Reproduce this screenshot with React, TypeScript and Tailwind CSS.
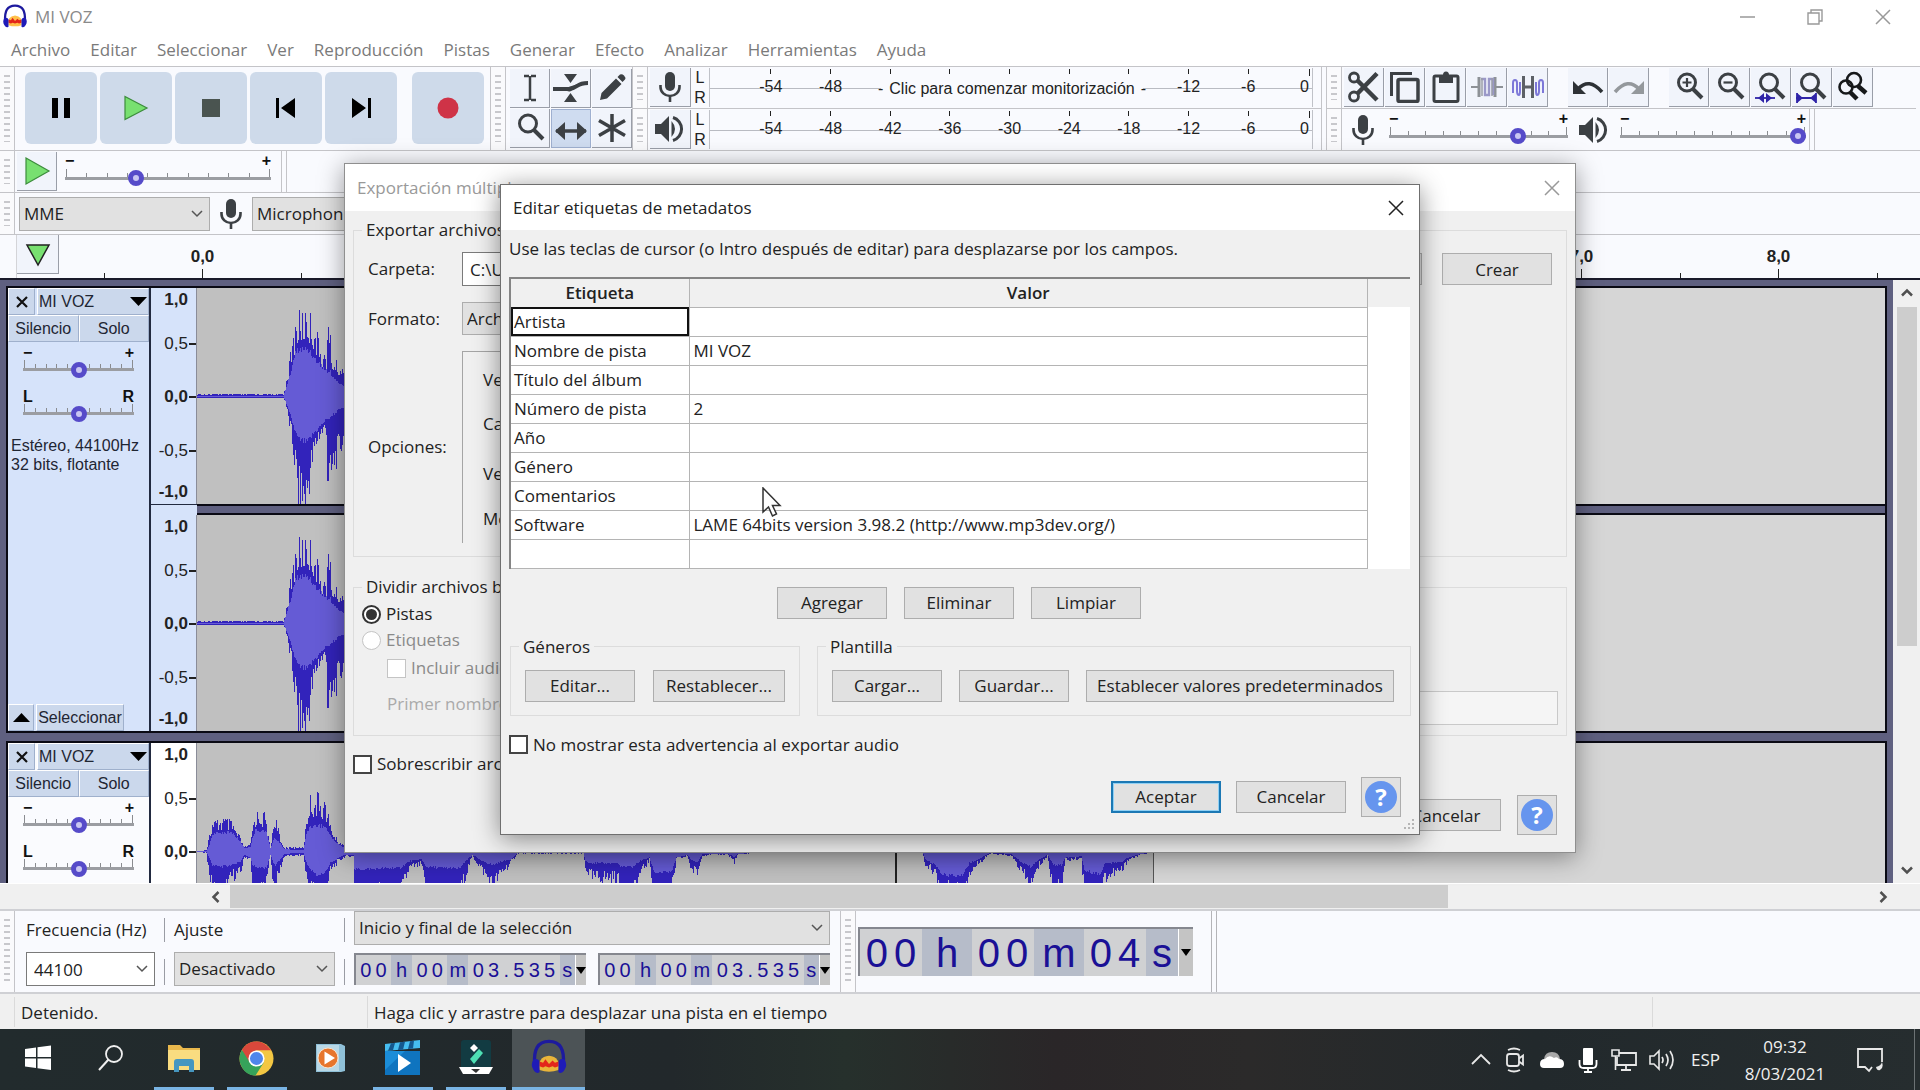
import React from "react";

/* ---------- wave forms ---------- */

// x, peak top, peak bottom, rms top, rms bottom; distances from the centre line
type Point = [number, number, number, number, number];

const VOICE: Point[] = [
  [0, 2, 1, 0, 0], [86, 2, 1, 0, 0], [88, 10, 5, 6, 4], [93, 44, 40, 24, 20], [98, 78, 84, 46, 38],
  [101, 86, 124, 50, 46], [109, 92, 124, 50, 49], [113, 86, 92, 48, 45], [117, 78, 66, 40, 38], [121, 60, 48, 36, 34],
  [128, 44, 40, 28, 25], [129, 44, 40, 28, 25], [130, 74, 100, 26, 23], [133, 66, 100, 26, 23], [134, 42, 96, 22, 20], [137, 38, 80, 20, 18],
  [141, 34, 66, 14, 14], [148, 26, 50, 10, 10], [170, 4, 4, 2, 2], [1200, 2, 2, 0, 0],
];

const SPEECH: Point[] = [
  [0, 0, 0, 0, 0], [9, 1, 1, 0, 0], [11, 14, 20, 4, 4], [15, 30, 46, 18, 14], [25, 36, 54, 20, 16], [35, 30, 30, 20, 14],
  [43, 14, 26, 10, 10], [47, 4, 6, 3, 3], [53, 8, 9, 5, 6], [55, 26, 44, 14, 14], [58, 42, 54, 22, 16], [68, 40, 54, 22, 18], [70, 22, 22, 16, 14],
  [73, 4, 5, 3, 3], [76, 30, 40, 12, 12], [78, 40, 44, 14, 14], [83, 12, 20, 8, 8], [87, 4, 5, 2, 2], [106, 4, 4, 1, 1], [109, 34, 30, 18, 12],
  [112, 58, 44, 26, 18], [121, 60, 54, 28, 26], [128, 54, 50, 26, 22], [133, 28, 24, 16, 12], [139, 14, 14, 9, 8], [147, 6, 6, 3, 3],
  [156, 5, 5, 3, 3], [157, 30, 54, 20, 19], [203, 30, 54, 20, 17], [207, 20, 38, 16, 14], [212, 16, 20, 12, 10], [224, 10, 16, 8, 8],
  [229, 20, 50, 14, 16], [262, 24, 54, 16, 18], [270, 10, 22, 8, 8], [275, 4, 5, 3, 3], [285, 10, 22, 8, 10], [295, 20, 42, 12, 14],
  [305, 16, 24, 10, 10], [313, 10, 15, 7, 8], [320, 2, 2, 1, 1], [386, 2, 2, 1, 1], [388, 12, 20, 8, 10], [395, 14, 32, 9, 12],
  [420, 14, 32, 9, 12], [424, 20, 54, 12, 16], [436, 20, 54, 12, 16], [443, 12, 26, 8, 9], [452, 8, 10, 6, 6], [457, 14, 54, 12, 22],
  [474, 14, 54, 12, 22], [479, 6, 9, 5, 6], [490, 3, 5, 2, 3], [494, 8, 22, 5, 9], [500, 8, 26, 5, 11], [505, 3, 4, 1, 2],
  [530, 2, 3, 1, 2], [537, 5, 12, 2, 5], [541, 2, 3, 1, 2], [570, 0, 0, 0, 0], [725, 0, 0, 0, 0], [728, 8, 16, 5, 8],
  [738, 10, 26, 6, 14], [745, 20, 50, 12, 24], [764, 20, 50, 12, 26], [772, 10, 26, 7, 12], [782, 6, 13, 4, 7], [792, 1, 2, 1, 1],
  [814, 3, 5, 1, 2], [824, 8, 24, 6, 11], [833, 10, 44, 7, 16], [842, 7, 16, 4, 8], [850, 3, 5, 2, 3], [856, 12, 48, 8, 14],
  [864, 12, 48, 8, 14], [868, 5, 10, 3, 6], [884, 4, 8, 3, 5], [887, 20, 54, 12, 20], [903, 20, 54, 12, 24], [907, 10, 32, 6, 13],
  [926, 8, 22, 5, 10], [930, 6, 10, 4, 6], [944, 2, 3, 1, 2], [957, 0, 0, 0, 0],
];

function noise(n: number) {
  const s = Math.sin(n * 12.9898) * 43758.5453;
  return s - Math.floor(s);
}

const HALF = 108;

function envelope(points: Point[], upper: number, lower: number, rough: number) {
  const last = points[points.length - 1][0];
  const top: string[] = [];
  const bottom: string[] = [];
  let i = 0;
  for (let x = 0; x < last; x += 1) {
    while (points[i + 1][0] <= x) i += 1;
    const a = points[i];
    const b = points[i + 1];
    const k = (x - a[0]) / (b[0] - a[0]);
    const up = (a[upper] + (b[upper] - a[upper]) * k) * (1 - rough * noise(x + upper * 31));
    const down = (a[lower] + (b[lower] - a[lower]) * k) * (1 - rough * noise(x + lower * 57));
    top.push(`V${Math.round(HALF - up)}H${x + 1}`);
    bottom.unshift(`V${Math.round(HALF + down + 1)}H${x}`);
  }
  return `M0 ${HALF}${top.join("")}V${HALF}${bottom.join("")}Z`;
}

function Wave({ points, split }: { points: Point[]; split?: boolean }) {
  return (
    <svg width="1200" height="216" className="block shrink-0" aria-hidden="true">
      <path d={envelope(points, 1, 2, 0.45)} fill="#3223bb" shapeRendering="crispEdges" />
      <path d={envelope(points, 3, 4, 0.15)} fill="#655bd5" shapeRendering="crispEdges" />
      {split && <path d="M699 0v216" stroke="#222" strokeWidth="2" />}
    </svg>
  );
}

/* ---------- icons ---------- */

const INK = "#3c4044";

function Svg({ w = 32, h = 32, children, box = "0 0 32 32" }: { w?: number; h?: number; box?: string; children: React.ReactNode }) {
  return (
    <svg width={w} height={h} viewBox={box} fill="none" className="block shrink-0" aria-hidden="true">
      {children}
    </svg>
  );
}

const Mic = () => (
  <Svg>
    <rect x="11" y="1" width="10" height="19" rx="5" fill={INK} />
    <path d="M6.500 14v2a9.500 9 0 0 0 19 0v-2M16 25v6" stroke={INK} strokeWidth="2.600" />
  </Svg>
);
const Speaker = () => (
  <Svg>
    <path d="M1 11h6l8-8v26l-8-8H1z" fill={INK} />
    <path d="M19 4.500a12 12 0 0 1 0 23" stroke={INK} strokeWidth="3" />
    <path d="M17.500 8q7 8 0 16z" fill={INK} />
  </Svg>
);
const IBeam = () => (
  <Svg><path d="M10 4h5m2 0h5M10 28h5m2 0h5M16 4v24" stroke={INK} strokeWidth="2.500" /></Svg>
);
const Envelope = () => (
  <Svg w={38} h={32} box="0 0 38 32">
    <path d="M12 2h13l-6.500 9zM12 30h13l-6.500-9z" fill={INK} />
    <path d="M1 17h16q4 0 8-3t11-3" stroke={INK} strokeWidth="4" />
    <path d="M14 17q4 4 9-3z" fill={INK} stroke={INK} strokeWidth="2" />
  </Svg>
);
const Pencil = () => (
  <Svg>
    <path d="M4 28l1.500-7L20 6.500l5.500 5.500L11 26.500zM21.500 5l2.500-2.500q2-1 4 1t1 4L26.500 10z" fill={INK} />
  </Svg>
);
const Magnifier = ({ children }: { children?: React.ReactNode }) => (
  <Svg>
    <circle cx="14" cy="11.500" r="8.500" stroke={INK} strokeWidth="3" />
    <path d="M20 18l9 9" stroke={INK} strokeWidth="4" />
    {children}
  </Svg>
);
const TimeShift = () => (
  <Svg w={36} h={32} box="0 0 36 32">
    <path d="M3 18h30" stroke={INK} strokeWidth="3.500" />
    <path d="M2 18l10-9v18zM34 18L24 9v18z" fill={INK} />
  </Svg>
);
const Asterisk = () => (
  <Svg><path d="M16 2v28M3 8.500l26 15M29 8.500L3 23.500" stroke={INK} strokeWidth="3.500" /></Svg>
);
const Scissors = () => (
  <Svg>
    <circle cx="6" cy="6.500" r="4.500" stroke={INK} strokeWidth="2.800" />
    <circle cx="6" cy="25.500" r="4.500" stroke={INK} strokeWidth="2.800" />
    <path d="M9 9l20 20M9 23L29 2.500" stroke={INK} strokeWidth="4.500" />
  </Svg>
);
const Copy = () => (
  <Svg>
    <path d="M2.500 25V2.500H23" stroke={INK} strokeWidth="3" />
    <rect x="9" y="8.500" width="20" height="22" rx="1.500" stroke={INK} strokeWidth="3.500" />
  </Svg>
);
const Paste = () => (
  <Svg>
    <rect x="4" y="5" width="24" height="25.500" rx="1.500" stroke={INK} strokeWidth="3" />
    <path d="M9 4h4q0-3.500 3-3.500t3 3.500h4v8H9z" fill={INK} />
  </Svg>
);
const Trim = () => (
  <Svg>
    <path d="M0 16h7M25 16h7" stroke="#8d9196" strokeWidth="2" />
    <path d="M8 6v20M24 6v20" stroke="#8d9196" strokeWidth="3" />
    <path d="M10 8h4v16h4V8h4v16" stroke="#9a98c8" strokeWidth="2.400" />
    <path d="M11 7v18M21 7v18" stroke="#9a9da6" strokeWidth="1.500" />
  </Svg>
);
const Silence = () => (
  <Svg>
    <path d="M1 22V12q0-3 2-3t2 3v8q0 4 2 4 1 0 1-4v-9M31 22V12q0-3-2-3t-2 3v8q0 4-2 4-1 0-1-4v-9" stroke="#7d78d8" strokeWidth="2" />
    <path d="M11.500 5v22M20.500 5v22M11 16h10" stroke="#5c6066" strokeWidth="3" />
  </Svg>
);
const Undo = ({ flip }: { flip?: boolean }) => (
  <Svg>
    <g transform={flip ? "matrix(-1 0 0 1 32 0)" : undefined}>
      <path d="M6 18Q17 6 30 21" stroke={flip ? "#94989c" : "#2d3135"} strokeWidth="3.500" />
      <path d="M1 10v13h13z" fill={flip ? "#94989c" : "#2d3135"} />
    </g>
  </Svg>
);
const ZoomToggle = () => (
  <Svg>
    <g stroke="#16181a" strokeWidth="2.600">
      <circle cx="17" cy="9" r="7" />
      <circle cx="9" cy="16" r="6.500" />
      <path d="M21 15l8 7M13 21l7 7" strokeWidth="4.500" />
    </g>
  </Svg>
);

const Headphones = ({ size, dark }: { size: number; dark?: boolean }) => (
  <Svg w={size} h={size}>
    <path d="M8 26Q6 15 16 14q10 1 8 12-8 3-16 0z" fill={dark ? "#e9b53a" : "#ffc04a"} />
    <path d="M8 19l3 1 2-3 3 4 3-3 2 2 3-1v4l-3 1-2-1-3 1-3-1-2 1-3-1z" fill="#e3261b" />
    <path d="M4 22Q2 2 16 2t12 20" stroke="#1d1a9e" strokeWidth="2.800" />
    <path d="M3 17q5-1 5 3v8q-3 2-5-2-3-4 0-9zM29 17q-5-1-5 3v8q3 2 5-2 3-4 0-9z" fill="#1f1bb8" />
  </Svg>
);

const Cross = ({ size = 16, color = "#222" }: { size?: number; color?: string }) => (
  <Svg w={size} h={size} box="0 0 16 16">
    <path d="M1 1l14 14M15 1L1 15" stroke={color} strokeWidth="1.500" />
  </Svg>
);

/* ---------- shared parts ---------- */

function Grip() {
  return (
    <div className="flex w-[15px] shrink-0 justify-center border-r border-[#c4c4c8] bg-[#fafafc] py-2">
      <div className="w-[6px] bg-[repeating-linear-gradient(180deg,#c8c8cc_0px,#c8c8cc_2px,transparent_2px,transparent_6px)]" />
    </div>
  );
}

function ToolButton({ label, on, children, className = "w-[40px]" }: { label: string; on?: boolean; className?: string; children: React.ReactNode }) {
  return (
    <button
      type="button"
      aria-label={label}
      className={`flex h-[39px] shrink-0 items-center justify-center border-r border-b ${on ? "border-[#9fb0d0] border-t border-l bg-[#cfdcf0]" : "border-[#9a9ea8] bg-[#f1f4fb]"} ${className}`}
    >
      {children}
    </button>
  );
}

function Slider({ label, value, ends = ["−", "+"], count = 11, className }: { label: string; value: number; ends?: string[]; count?: number; className: string }) {
  return (
    <div className={`flex flex-col ${className}`}>
      <div className="flex h-[15px] items-center justify-between font-['Liberation_Sans',sans-serif] text-[16px] leading-none font-bold text-[#111]" aria-hidden="true">
        <span>{ends[0]}</span>
        <span>{ends[1]}</span>
      </div>
      <div className="flex h-[8px] items-end justify-between px-px" aria-hidden="true">
        {Array.from({ length: count }, (_, i) => (
          <span key={i} className={i === 0 || i === count - 1 ? "h-[8px] w-px bg-[#8a8c90]" : "h-[4px] w-px bg-[#8a8c90]"} />
        ))}
      </div>
      <input
        type="range"
        aria-label={label}
        defaultValue={value}
        className="block h-[3px] w-full appearance-none bg-[#9b9da2] [&::-webkit-slider-thumb]:h-[16px] [&::-webkit-slider-thumb]:w-[16px] [&::-webkit-slider-thumb]:appearance-none [&::-webkit-slider-thumb]:rounded-full [&::-webkit-slider-thumb]:border-[5px] [&::-webkit-slider-thumb]:border-[#564bc9] [&::-webkit-slider-thumb]:bg-[#c9c6f2]"
      />
    </div>
  );
}

function Combo({ label, value, className }: { label: string; value: string; className: string }) {
  return (
    <div className={`grid shrink-0 items-center ${className}`}>
      <select aria-label={label} className="col-start-1 row-start-1 h-full w-full appearance-none border border-[#adadad] bg-inherit pl-[4px] text-[17px] text-[#222]">
        <option>{value}</option>
      </select>
      <svg width="12" height="8" viewBox="0 0 12 8" className="pointer-events-none col-start-1 row-start-1 mr-[7px] justify-self-end" aria-hidden="true">
        <path d="M1 1l5 5 5-5" stroke="#555" strokeWidth="1.500" fill="none" />
      </svg>
    </div>
  );
}

function Push({ children, className = "w-[110px]" }: { children: React.ReactNode; className?: string }) {
  return (
    <button type="button" className={`h-[32px] shrink-0 border border-[#adadad] bg-[#e1e1e1] text-[17px] leading-none whitespace-nowrap text-[#222] ${className}`}>
      {children}
    </button>
  );
}

function Help() {
  return (
    <button type="button" aria-label="Ayuda" className="flex h-[40px] w-[40px] shrink-0 items-center justify-center border border-[#adadad] bg-[#e1e1e1]">
      <span className="flex h-[32px] w-[32px] items-center justify-center rounded-full bg-[#6695ee] text-[24px] leading-none font-bold text-white">?</span>
    </button>
  );
}

function Meter({ label, prompt, icon }: { label: string; prompt?: boolean; icon: React.ReactNode }) {
  const marks = ["-54", "-48", "-42", "-36", "-30", "-24", "-18", "-12", "-6"];
  return (
    <div className="flex h-[42px] border-b border-[#c4c4c8]">
      <Grip />
      <div className="flex min-w-0 flex-1 items-center pr-[8px] pl-[2px] font-['Liberation_Sans',sans-serif] text-[16px] text-[#222]">
        <ToolButton label={label} className="w-[41px]">{icon}</ToolButton>
        <div className="flex w-[18px] shrink-0 flex-col items-center leading-[20px]">
          <span>L</span>
          <span>R</span>
        </div>
        <div className="relative flex h-[39px] flex-1 border-x border-[#c0c2c8] pl-[31px]">
          <div className="absolute inset-x-0 top-[20px] h-px bg-[#b9bbc2]" />
          {marks.map((m, i) => (
            <div key={m} className="relative flex flex-1 flex-col items-center">
              <span className="mt-px h-[5px] w-px bg-[#222]" />
              {(!prompt || i < 2 || i > 6) && <span className="mt-[3px] leading-[20px]">{m}</span>}
            </div>
          ))}
          <div className="relative flex w-[34px] shrink-0 flex-col items-start">
            <span className="mt-px ml-[31px] h-[7px] w-px bg-[#222]" />
            <span className="mt-px ml-[22px] leading-[20px]">0</span>
          </div>
          {prompt && (
            <button type="button" className="absolute top-[7px] left-[171px] flex h-[28px] w-[262px] items-center justify-center gap-[6px] bg-[#f9fafe] text-[16px] whitespace-nowrap">
              <span>-</span>Clic para comenzar monitorización<span>-</span>
            </button>
          )}
        </div>
      </div>
    </div>
  );
}

function RulerV({ className }: { className: string }) {
  const marks = [
    { t: "1,0", c: "font-bold", tick: false },
    { t: "0,5", c: "mt-[20px]", tick: true },
    { t: "0,0", c: "mt-[29px] font-bold", tick: true },
    { t: "-0,5", c: "mt-[30px]", tick: true },
    { t: "-1,0", c: "mt-[17px] font-bold", tick: false },
  ];
  return (
    <div className={`flex h-[216px] w-[46px] shrink-0 flex-col border-r border-[#8a8c98] text-[17px] leading-[24px] text-[#222] ${className}`}>
      {marks.map((m) => (
        <div key={m.t} className={`flex items-center justify-end gap-px ${m.c}`}>
          <span>{m.t}</span>
          <span className={m.tick ? "h-[2px] w-[7px] bg-[#222]" : "w-[7px]"} />
        </div>
      ))}
    </div>
  );
}

function Channel({ points, ruler, clip, split }: { points: Point[]; ruler: string; clip: string; split?: boolean }) {
  return (
    <div className="flex h-[216px]">
      <RulerV className={ruler} />
      <div className="flex min-w-0 flex-1 overflow-hidden bg-[#d6d6d6]">
        <div className={`h-full shrink-0 overflow-hidden bg-[#c0c0c0] ${clip}`}>
          <Wave points={points} split={split} />
        </div>
      </div>
    </div>
  );
}

function Track({ panel, footer, children }: { panel: string; footer?: boolean; children: React.ReactNode }) {
  const chip = "border border-[#9fb0cc] border-t-white border-l-white bg-[#cbd8ec]";
  return (
    <section className="flex border-2 border-[#0a0a14] bg-[#5f6080]">
      <div className={`flex w-[143px] shrink-0 flex-col border-r-2 border-[#222a40] text-[#1f2633] ${panel}`}>
        <div className="flex h-[27px] gap-[2px]">
          <button type="button" aria-label="Cerrar pista" className={`flex w-[27px] items-center justify-center ${chip}`}>
            <Svg w={12} h={12} box="0 0 12 12"><path d="M1 1l10 10M11 1L1 11" stroke="#111" strokeWidth="2.200" /></Svg>
          </button>
          <button type="button" className={`flex flex-1 items-center justify-between px-px text-[16px] ${chip}`}>
            MI VOZ
            <Svg w={17} h={9} box="0 0 17 9"><path d="M0 0h17l-8.500 9z" fill="#000" /></Svg>
          </button>
        </div>
        <div className="flex h-[27px] text-[16px]">
          <button type="button" className={`flex-1 ${chip}`}>Silencio</button>
          <button type="button" className={`flex-1 ${chip}`}>Solo</button>
        </div>
        <div className="px-[15px] pt-[3px]">
          <Slider label="Ganancia" value={50} className="w-full" />
        </div>
        <div className="px-[15px] pt-[18px]">
          <Slider label="Panorama" value={50} ends={["L", "R"]} className="w-full" />
        </div>
        <p className="pt-[21px] pl-[3px] text-[16px] leading-[19px] whitespace-nowrap">Estéreo, 44100Hz<br />32 bits, flotante</p>
        {footer && (
          <div className="mt-auto flex h-[27px] gap-[2px] text-[16px]">
            <button type="button" aria-label="Contraer" className={`flex w-[26px] items-center justify-center ${chip}`}>
              <Svg w={17} h={9} box="0 0 17 9"><path d="M0 9h17L8.500 0z" fill="#000" /></Svg>
            </button>
            <button type="button" className={`w-[88px] ${chip}`}>Seleccionar</button>
          </div>
        )}
      </div>
      <div className="flex min-w-0 flex-1 flex-col">{children}</div>
    </section>
  );
}

function TimeBox({ label, parts, big }: { label: string; parts: string[]; big?: boolean }) {
  return (
    <div
      role="group"
      aria-label={label}
      className={`flex shrink-0 border-t-2 border-l-2 border-[#85878f] bg-[#b6bcc9] font-['Liberation_Sans',sans-serif] text-[#1a1096] ${big ? "h-[49px] w-[335px] text-[40px]" : "h-[32px] w-[232px] text-[20px]"}`}
    >
      {parts.map((p, i) => {
        const unit = /[a-z]/.test(p);
        return (
          <span key={i} className={`flex items-center justify-evenly ${unit ? "" : "bg-[#d0d1d3]"} ${big ? (unit ? (i === parts.length - 1 ? "w-[32px]" : "w-[50px]") : "w-[62px]") : unit ? (i === parts.length - 1 ? "w-[16px]" : "w-[22px]") : p.length > 2 ? "w-[94px]" : "w-[36px]"}`}>
            {p.split("").map((c, j) => (
              <span key={j}>{c}</span>
            ))}
          </span>
        );
      })}
      <button type="button" aria-label="Formato de tiempo" className="flex flex-1 items-center justify-center border-l border-white bg-[#c4c4c4]">
        <Svg w={10} h={7} box="0 0 10 7"><path d="M0 0h10L5 7z" fill="#000" /></Svg>
      </button>
    </div>
  );
}

/* ---------- dialogs ---------- */

function ExportDialog() {
  return (
    <div role="dialog" aria-label="Exportación múltiple" className="absolute top-[163px] left-[344px] flex h-[690px] w-[1232px] flex-col border border-[#8f8f8f] bg-[#f0f0f0] text-[17px] text-[#222] shadow-[0_4px_24px_rgba(0,0,0,0.4)]">
      <div className="flex h-[47px] shrink-0 items-center justify-between bg-white pr-[15px] pl-[12px] text-[#999]">
        <span>Exportación múltiple</span>
        <button type="button" aria-label="Cerrar"><Cross color="#999" /></button>
      </div>
      <div className="flex flex-col px-[8px] pt-[9px]">
        <fieldset className="border border-[#dcdcdc] px-[14px] pb-[13px]">
          <legend className="-ml-[6px] px-[4px] leading-[20px]">Exportar archivos a:</legend>
          <div className="grid grid-cols-[94px_1fr] items-center gap-y-[16px] pt-[12px]">
            <label htmlFor="folder">Carpeta:</label>
            <div className="flex items-center">
              <input id="folder" readOnly value="C:\Users" className="h-[34px] flex-1 border border-[#7a7a7a] bg-white px-[7px]" />
              <Push className="ml-[16px] w-[110px]">Elegir...</Push>
              <Push className="ml-[20px] w-[110px]">Crear</Push>
            </div>
            <span>Formato:</span>
            <Combo label="Formato" value="Archivos MP3" className="mr-[160px] h-[33px] bg-[#e1e1e1]" />
            <span>Opciones:</span>
            <div className="mr-[160px] flex h-[192px] flex-col border-t border-l border-[#a5a5a5] pl-[20px]">
              <span className="mt-[18px] leading-[20px]">Velocidad</span>
              <span className="mt-[24px] leading-[20px]">Calidad</span>
              <span className="mt-[30px] leading-[20px]">Velocidad</span>
              <span className="mt-[25px] leading-[20px]">Modo</span>
            </div>
          </div>
        </fieldset>
        <fieldset className="mt-[20px] flex flex-col border border-[#dcdcdc] px-[8px] pb-[10px]">
          <legend className="px-[4px] leading-[20px]">Dividir archivos basados en:</legend>
          <label className="mt-[6px] flex h-[22px] items-center gap-[5px]">
            <input type="radio" name="split" defaultChecked className="flex h-[19px] w-[19px] appearance-none items-center justify-center rounded-full border-2 border-[#333] bg-white before:h-[11px] before:w-[11px] before:rounded-full before:bg-[#333]" />
            Pistas
          </label>
          <label className="mt-[4px] flex h-[22px] items-center gap-[5px] text-[#8a8a8a]">
            <input type="radio" name="split" disabled className="h-[19px] w-[19px] appearance-none rounded-full border border-[#c4c4c4] bg-white" />
            Etiquetas
          </label>
          <label className="mt-[6px] ml-[25px] flex h-[22px] items-center gap-[5px] text-[#8a8a8a]">
            <input type="checkbox" disabled className="h-[19px] w-[19px] appearance-none border border-[#c4c4c4] bg-white" />
            Incluir audio
          </label>
          <div className="mt-[12px] flex items-center gap-[10px] pl-[25px] text-[#aaa]">
            <label htmlFor="first" className="pb-[8px]">Primer nombre</label>
            <input id="first" disabled className="h-[34px] flex-1 border border-[#c9c9c9] bg-[#f5f5f5]" />
          </div>
        </fieldset>
        <label className="mt-[18px] flex h-[20px] items-center gap-[5px]">
          <input type="checkbox" className="h-[19px] w-[19px] appearance-none border-2 border-[#444] bg-white" />
          Sobrescribir archivos
        </label>
        <div className="mt-[21px] flex items-center justify-end gap-[16px] pr-[10px]">
          <Push>Exportar</Push>
          <Push>Cancelar</Push>
          <Help />
        </div>
      </div>
    </div>
  );
}

const ROWS: [string, string][] = [
  ["Artista", ""],
  ["Nombre de pista", "MI VOZ"],
  ["Título del álbum", ""],
  ["Número de pista", "2"],
  ["Año", ""],
  ["Género", ""],
  ["Comentarios", ""],
  ["Software", "LAME 64bits version 3.98.2 (http://www.mp3dev.org/)"],
  ["", ""],
];

function MetadataDialog() {
  return (
    <div role="dialog" aria-label="Editar etiquetas de metadatos" className="absolute top-[184px] left-[500px] flex h-[651px] w-[920px] flex-col border border-[#6f6f6f] bg-[#f0f0f0] text-[17px] text-[#222] shadow-[0_4px_24px_rgba(0,0,0,0.45)]">
      <div className="flex h-[45px] shrink-0 items-center justify-between bg-white pr-[15px] pl-[12px]">
        <span>Editar etiquetas de metadatos</span>
        <button type="button" aria-label="Cerrar"><Cross /></button>
      </div>
      <p className="mt-[9px] pl-[8px] leading-[20px]">Use las teclas de cursor (o Intro después de editar) para desplazarse por los campos.</p>
      <div className="mt-[18px] mr-[9px] ml-[8px] border-t-2 border-l-2 border-[#858585] bg-[linear-gradient(180deg,#f0f0f0_28px,#ffffff_28px)]">
        <table className="w-[857px] table-fixed border-collapse bg-white">
          <thead>
            <tr className="h-[28px]">
              <th className="w-[178px] border-r border-b border-[#b4b4b4] bg-[#f0f0f0] p-0 leading-[20px] font-semibold">Etiqueta</th>
              <th className="border-r border-b border-[#b4b4b4] bg-[#f0f0f0] p-0 leading-[20px] font-semibold">Valor</th>
            </tr>
          </thead>
          <tbody>
            {ROWS.map(([tag, value], i) => (
              <tr key={i} className="h-[29px]">
                <td className={`border-r border-b border-[#b4b4b4] px-[3px] py-0 leading-[20px] ${i === 0 ? "outline-2 -outline-offset-2 outline-[#111]" : ""}`}>{tag}</td>
                <td className="border-r border-b border-[#b4b4b4] px-[4px] py-0 leading-[20px]">{value}</td>
              </tr>
            ))}
          </tbody>
        </table>
      </div>
      <div className="mt-[18px] flex justify-center gap-[17px] pr-[2px]">
        <Push>Agregar</Push>
        <Push>Eliminar</Push>
        <Push>Limpiar</Push>
      </div>
      <div className="mt-[18px] mr-[8px] ml-[9px] flex gap-[17px]">
        <fieldset className="border border-[#dcdcdc] px-[14px] pb-[13px]">
          <legend className="-ml-[6px] px-[4px] leading-[20px]">Géneros</legend>
          <div className="flex gap-[18px] pt-[13px]">
            <Push>Editar...</Push>
            <Push className="w-[132px]">Restablecer...</Push>
          </div>
        </fieldset>
        <fieldset className="flex-1 border border-[#dcdcdc] px-[14px] pb-[13px]">
          <legend className="-ml-[6px] px-[4px] leading-[20px]">Plantilla</legend>
          <div className="flex gap-[17px] pt-[13px]">
            <Push>Cargar...</Push>
            <Push>Guardar...</Push>
            <Push className="w-[308px]">Establecer valores predeterminados</Push>
          </div>
        </fieldset>
      </div>
      <label className="mt-[19px] ml-[8px] flex h-[20px] items-center gap-[5px]">
        <input type="checkbox" className="h-[19px] w-[19px] appearance-none border-2 border-[#444] bg-white" />
        No mostrar esta advertencia al exportar audio
      </label>
      <div className="mt-[22px] flex items-center justify-end gap-[15px] pr-[18px]">
        <button type="button" className="h-[32px] w-[110px] border-2 border-[#1c78b4] bg-[#e1e1e1] leading-none shadow-[inset_0_0_0_1px_#8fd0f4]">Aceptar</button>
        <Push>Cancelar</Push>
        <Help />
      </div>
      <div className="absolute right-[4px] bottom-[3px]">
        <Svg w={12} h={12} box="0 0 12 12"><path d="M9 0h2v2H9zM5 4h2v2H5zM9 4h2v2H9zM1 8h2v2H1zM5 8h2v2H5zM9 8h2v2H9z" fill="#b5b5b5" /></Svg>
      </div>
      <div className="pointer-events-none absolute top-[302px] left-[261px]">
        <Svg w={20} h={32} box="0 0 20 32"><path d="M1 1v24l5.500-5 4 9 4-2-4-8.500h7.500z" fill="#fff" stroke="#333" strokeWidth="1.500" /></Svg>
      </div>
    </div>
  );
}

/* ---------- main window ---------- */

const MENU = ["Archivo", "Editar", "Seleccionar", "Ver", "Reproducción", "Pistas", "Generar", "Efecto", "Analizar", "Herramientas", "Ayuda"];

const TRANSPORT: { label: string; art: React.ReactNode; c: string }[] = [
  { label: "Pausa", c: "", art: <path d="M7 6h6v20H7zM19 6h6v20h-6z" fill="#000" /> },
  { label: "Reproducir", c: "", art: <path d="M5 4.500l22 11.500L5 27.500z" fill="#78e070" stroke="#3c8c3c" strokeWidth="1.200" /> },
  { label: "Detener", c: "", art: <path d="M7 7h18v18H7z" fill="#4a5450" /> },
  { label: "Ir al inicio", c: "", art: <path d="M6 6h3v20H6zM25 6v20L11 16z" fill="#000" /> },
  { label: "Ir al final", c: "", art: <path d="M23 6h3v20h-3zM7 6v20l14-10z" fill="#000" /> },
  { label: "Grabar", c: "ml-[12px]", art: <circle cx="16" cy="16" r="10.500" fill="#cf3347" /> },
];

function Toolbars() {
  return (
    <>
      <div className="flex h-[85px] shrink-0 border-t border-b border-[#c4c4c8] bg-[#f9fafe]">
        <Grip />
        <div className="flex items-center gap-[3px] border-r border-[#c4c4c8] pr-[6px] pb-px pl-[10px]">
          {TRANSPORT.map((b) => (
            <button key={b.label} type="button" aria-label={b.label} className={`flex h-[72px] w-[72px] items-center justify-center rounded-md bg-[#cedaea] ${b.c}`}>
              <Svg>{b.art}</Svg>
            </button>
          ))}
        </div>
        <Grip />
        <div className="grid grid-cols-3 content-center gap-px border-r border-[#c4c4c8] pl-[4px]">
          <ToolButton label="Selección"><IBeam /></ToolButton>
          <ToolButton label="Envolvente"><Envelope /></ToolButton>
          <ToolButton label="Dibujo"><Pencil /></ToolButton>
          <ToolButton label="Ampliación"><Magnifier /></ToolButton>
          <ToolButton label="Desplazamiento en el tiempo" on><TimeShift /></ToolButton>
          <ToolButton label="Multiherramienta"><Asterisk /></ToolButton>
        </div>
        <div className="max-w-[689px] min-w-0 flex-1 border-r border-[#c4c4c8]">
          <Meter label="Medidor de grabación" prompt icon={<Mic />} />
          <Meter label="Medidor de reproducción" icon={<Speaker />} />
        </div>
        <div className="ml-[4px] flex w-[590px] shrink-0 flex-col border-l border-[#c4c4c8]">
          <div className="flex h-[42px] border-b border-[#c4c4c8]">
            <Grip />
            <div className="flex items-center gap-px pl-[2px]">
              <ToolButton label="Cortar"><Scissors /></ToolButton>
              <ToolButton label="Copiar"><Copy /></ToolButton>
              <ToolButton label="Pegar"><Paste /></ToolButton>
              <ToolButton label="Recortar"><Trim /></ToolButton>
              <ToolButton label="Silenciar"><Silence /></ToolButton>
              <span className="w-[18px]" />
              <ToolButton label="Deshacer"><Undo /></ToolButton>
              <ToolButton label="Rehacer"><Undo flip /></ToolButton>
              <span className="w-[18px]" />
              <ToolButton label="Acercar"><Magnifier><path d="M9.500 11.500h9M14 7v9" stroke={INK} strokeWidth="2.200" /></Magnifier></ToolButton>
              <ToolButton label="Alejar"><Magnifier><path d="M9.500 11.500h9" stroke={INK} strokeWidth="2.200" /></Magnifier></ToolButton>
              <ToolButton label="Ajustar selección"><Magnifier><path d="M0 27h20" stroke="#2f24a8" strokeWidth="1.800" /><path d="M3 27l6-5v10zM17 27l-6-5v10z" fill="#2f24a8" /></Magnifier></ToolButton>
              <ToolButton label="Ajustar proyecto"><Magnifier><path d="M0 27h20M1 22v10M20 22v10" stroke="#2f24a8" strokeWidth="1.800" /><path d="M7 27l-6-5v10zM14 27l6-5v10z" fill="#2f24a8" /></Magnifier></ToolButton>
              <ToolButton label="Alternar zoom"><ZoomToggle /></ToolButton>
            </div>
          </div>
          <div className="flex flex-1">
            <Grip />
            <div className="flex items-center gap-[10px] border-r border-[#c4c4c8] pr-[3px] pl-[5px]">
              <Mic />
              <Slider label="Nivel de grabación" value={74} className="w-[179px] pb-[10px]" />
              <Speaker />
              <Slider label="Nivel de reproducción" value={100} className="w-[186px] pb-[10px]" />
            </div>
            <div className="ml-[4px] border-l border-[#c4c4c8]" />
          </div>
        </div>
      </div>

      <div className="flex h-[42px] shrink-0 border-b border-[#c4c4c8] bg-[#f9fafe]">
        <Grip />
        <div className="flex items-center gap-[8px] border-r border-[#c4c4c8] pr-[10px] pl-[2px]">
          <ToolButton label="Reproducir a velocidad">
            <Svg><path d="M5 3l23 13L5 29z" fill="#78e070" stroke="#3c8c3c" strokeWidth="1.200" /></Svg>
          </ToolButton>
          <Slider label="Velocidad" value={33} className="w-[206px] pb-[10px]" />
        </div>
        <div className="ml-[4px] border-l border-[#c4c4c8]" />
      </div>

      <div className="flex h-[42px] shrink-0 border-b border-[#c4c4c8] bg-[#f9fafe]">
        <Grip />
        <div className="flex items-center gap-[5px] pl-[4px]">
          <Combo label="Sistema de audio" value="MME" className="h-[34px] w-[191px] bg-[#e1e1e1]" />
          <Mic />
          <Combo label="Dispositivo de grabación" value="Microphone" className="h-[34px] w-[300px] bg-[#e1e1e1]" />
        </div>
      </div>

      <div className="flex h-[43px] shrink-0 overflow-hidden bg-[#f9fafe]">
        <div className="w-[17px] shrink-0 border-r border-[#d4d4d8]" />
        <ToolButton label="Cabezal fijo" className="w-[42px]">
          <Svg><path d="M5 7h22L16 27z" fill="#78e070" stroke="#222" strokeWidth="1.500" /></Svg>
        </ToolButton>
        <div className="ml-[45px] flex font-['Liberation_Sans',sans-serif] text-[17px] font-bold text-[#222]">
          {["0,0", "1,0", "2,0", "3,0", "4,0", "5,0", "6,0", "7,0", "8,0"].map((n) => (
            <div key={n} className="flex w-[197px] shrink-0 flex-col items-center">
              <span className="mt-[11px] leading-[22px]">{n}</span>
              <div className="mt-auto flex w-full items-end justify-between">
                <span className="h-[5px] w-px bg-[#222]" />
                <span className="h-[9px] w-px bg-[#222]" />
                <span className="w-px" />
              </div>
            </div>
          ))}
          <span className="mt-auto h-[5px] w-px bg-[#222]" />
        </div>
      </div>
    </>
  );
}

function Chevron({ turn = "" }: { turn?: string }) {
  return (
    <svg width="14" height="14" viewBox="0 0 14 14" className={`shrink-0 ${turn}`} aria-hidden="true">
      <path d="M2 9.500l5-5 5 5" stroke="#505050" strokeWidth="2.500" fill="none" />
    </svg>
  );
}

function Tracks() {
  return (
    <div className="flex min-h-0 flex-1 border-t-2 border-[#1a1a2a]">
      <div className="flex min-w-0 flex-1 flex-col gap-[8px] overflow-hidden bg-[#5f6080] pt-[6px] pr-[6px] pl-[6px] font-['Liberation_Sans',sans-serif]">
        <Track panel="bg-[#d6e3fa]" footer>
          <Channel points={VOICE} ruler="bg-[#d6e3fa]" clip="w-[1200px]" />
          <div className="flex h-[11px]">
            <div className="w-[46px] border-t border-[#222a40] bg-[#d6e3fa]" />
            <div className="flex-1 border-y-2 border-[#0a0a14]" />
          </div>
          <Channel points={VOICE} ruler="bg-[#d6e3fa]" clip="w-[1200px]" />
        </Track>
        <Track panel="bg-[#fafbfe]">
          <Channel points={SPEECH} ruler="bg-white" clip="w-[957px] border-r border-[#555]" split />
        </Track>
      </div>
      <div className="flex w-[27px] shrink-0 flex-col items-center bg-[#f0f0f0] py-[6px]">
        <Chevron />
        <div className="mt-[7px] h-[339px] w-[20px] bg-[#cdcdcd]" />
        <Chevron turn="mt-auto rotate-180" />
      </div>
    </div>
  );
}

function SelectionBar() {
  const time = ["00", "h", "00", "m", "03.535", "s"];
  return (
    <div className="flex h-[85px] shrink-0 border-t-2 border-b-2 border-[#cfd0d4] bg-[#f9fafe] text-[17px] text-[#222]">
      <Grip />
      <div className="flex w-[140px] flex-col justify-between py-px pl-[11px]">
        <label htmlFor="rate" className="pt-[7px] leading-[22px] whitespace-nowrap">Frecuencia (Hz)</label>
        <div className="mb-[5px] grid items-center">
          <input id="rate" defaultValue="44100" className="col-start-1 row-start-1 h-[34px] w-[129px] border border-[#7a7a7a] bg-white pl-[7px]" />
          <svg width="12" height="8" viewBox="0 0 12 8" className="col-start-1 row-start-1 mr-[7px] justify-self-end" aria-hidden="true">
            <path d="M1 1l5 5 5-5" stroke="#555" strokeWidth="1.500" fill="none" />
          </svg>
        </div>
      </div>
      <div className="mx-[9px] flex w-px flex-col justify-between py-[7px]">
        <span className="h-[24px] bg-[#9a9ca4]" />
        <span className="h-[26px] bg-[#9a9ca4]" />
      </div>
      <div className="flex flex-col justify-between py-px">
        <span className="pt-[7px] leading-[22px]">Ajuste</span>
        <Combo label="Ajuste" value="Desactivado" className="mb-[5px] h-[34px] w-[161px] bg-[#e1e1e1]" />
      </div>
      <div className="mx-[9px] flex w-px flex-col justify-between py-[7px]">
        <span className="h-[24px] bg-[#9a9ca4]" />
        <span className="h-[26px] bg-[#9a9ca4]" />
      </div>
      <div className="flex flex-col justify-between">
        <Combo label="Modo de selección" value="Inicio y final de la selección" className="h-[34px] w-[476px] bg-[#e1e1e1]" />
        <div className="mb-[7px] flex gap-[12px]">
          <TimeBox label="Inicio de la selección" parts={time} />
          <TimeBox label="Final de la selección" parts={time} />
        </div>
      </div>
      <div className="ml-[10px] flex border-l border-[#c4c4c8]"><Grip /></div>
      <div className="flex items-center border-r border-[#b4b4b8] pr-[18px] pl-[2px]">
        <TimeBox label="Posición" parts={["00", "h", "00", "m", "04", "s"]} big />
      </div>
      <div className="ml-[4px] border-l border-[#b4b4b8]" />
    </div>
  );
}

/* ---------- taskbar ---------- */

function Task({ label, open, active, children }: { label: string; open?: boolean; active?: boolean; children: React.ReactNode }) {
  return (
    <button type="button" aria-label={label} className={`flex h-full w-[73px] shrink-0 flex-col items-center ${active ? "bg-[#4c5356]" : ""}`}>
      <span className="flex flex-1 items-center justify-center">{children}</span>
      <span className={`h-[3px] ${active ? "w-full bg-[#79b4e4]" : open ? "w-[60px] bg-[#79b4e4]" : ""}`} />
    </button>
  );
}

function Taskbar() {
  return (
    <footer className="flex h-[61px] shrink-0 items-stretch bg-[linear-gradient(90deg,#222b2d,#22282b_35%,#26302c_44%,#2a2628_55%,#2b2a2a_65%,#22292c_80%,#262d2f)] pl-px text-[17px] text-[#f0f0f0]">
      <Task label="Inicio">
        <Svg w={26} h={26} box="0 0 26 26"><path d="M0 4l11-1.500V12H0zM12.500 2.200L26 .5V12H12.500zM0 13.500h11V23L0 21.500zM12.500 13.500H26V25l-13.500-1.800z" fill="#fff" /></Svg>
      </Task>
      <Task label="Buscar">
        <Svg w={26} h={26} box="0 0 26 26"><circle cx="16" cy="9" r="8" stroke="#f0f0f0" strokeWidth="1.800" /><path d="M10.500 14.500L1 25" stroke="#f0f0f0" strokeWidth="2" /></Svg>
      </Task>
      <Task label="Explorador de archivos" open>
        <Svg><path d="M0 3h12l3 3h17v22H0z" fill="#e9b84c" /><path d="M0 8h32v20H0z" fill="#f9dc80" /><path d="M6 30V20q0-3 3-3h14q3 0 3 3v10h-5v-6H11v6z" fill="#4596c0" /></Svg>
      </Task>
      <Task label="Chrome" open>
        <Svg w={35} h={35} box="0 0 36 36">
          <circle cx="18" cy="18" r="17.500" fill="#f3c743" />
          <path d="M18 18L2.800 9.300Q-2 18 3 27t14 8.500L25.500 22z" fill="#36a35a" />
          <path d="M18 9.500h15.300Q26 0 18 .5 8 .5 3 9l7.500 12z" fill="#d9483b" />
          <circle cx="18" cy="18" r="8.300" fill="#fff" /><circle cx="18" cy="18" r="6.700" fill="#4f86ec" />
        </Svg>
      </Task>
      <Task label="Reproductor multimedia">
        <Svg w={32} h={30} box="0 0 32 30"><path d="M2 1h25l4 2v25l-4 1H2z" fill="#8fc0d8" /><path d="M3 2h22v26H3z" fill="#b9d8e6" /><circle cx="14" cy="15" r="10" fill="#e7752c" stroke="#f7e3d0" /><path d="M10.500 8.500L21 15l-10.500 6.500z" fill="#fff" /></Svg>
      </Task>
      <Task label="Películas" open>
        <Svg w={36} h={36} box="0 0 36 36"><path d="M0 4L35 0v8L0 11z" fill="#46bdf0" /><path d="M6 3.300l4-.4-2 7.400-5 .4zM15 2.300l5-.6-2 8-5 .3zM25 1.200l4-.5-1 7.800-5 .4z" fill="#14588f" /><path d="M0 11h35v24H0z" fill="#0f74bf" /><path d="M0 11h20L0 30z" fill="#1b8dd8" /><path d="M13 14l13 9-13 9z" fill="#fff" /></Svg>
      </Task>
      <Task label="Filmora" open>
        <Svg w={34} h={36} box="0 0 34 36"><rect x="2" y="0" width="30" height="30" rx="3" fill="#123b42" /><path d="M11 8l4-4 4 4-4 4z" fill="#fff" /><path d="M20 9l4 4-9 11-4-5z" fill="#4de0b4" /><path d="M0 27h34l-4 7H4z" fill="#fff" /><path d="M12 29h9l-4 4z" fill="#333" /></Svg>
      </Task>
      <Task label="Audacity" open active><Headphones size={38} dark /></Task>
      <div className="ml-auto flex items-center">
        <div className="flex items-center gap-[12px]">
          <Svg w={20} h={20} box="0 0 20 20"><path d="M1 14l9-9 9 9" stroke="#e8e8e8" strokeWidth="1.800" /></Svg>
          <Svg w={24} h={26} box="0 0 24 26"><rect x="4" y="7" width="12" height="12" rx="2.500" stroke="#e8e8e8" strokeWidth="1.800" /><path d="M16 11.500l4-3v9l-4-3M5 3q6-3 12 0M5 23q6 3 12 0" stroke="#e8e8e8" strokeWidth="1.800" /></Svg>
          <Svg w={26} h={20} box="0 0 26 20"><path d="M5 9q1-7 8-7t8 7z" fill="#a9a9a9" /><path d="M1 14q0-5 5-5 4-5 9-1 3-2 5 1 5 0 5 5 0 4-4 4H5q-4 0-4-4z" fill="#fff" /></Svg>
          <Svg w={22} h={26} box="0 0 22 26"><rect x="6" y="1" width="10" height="17" rx="1" fill="#fff" /><path d="M2.500 13v4q0 4 4 4h9q4 0 4-4v-4M11 21v4M7 25h8" stroke="#fff" strokeWidth="1.800" /></Svg>
          <Svg w={26} h={24} box="0 0 26 24"><path d="M8 5h17v12H6V9M15 17v5M10 22h10" stroke="#e8e8e8" strokeWidth="1.800" /><path d="M1 2h7v6H1zM4.500 8v14" stroke="#e8e8e8" strokeWidth="1.600" /></Svg>
          <Svg w={26} h={22} box="0 0 26 22"><path d="M1 7h4l5-5v18l-5-5H1z" stroke="#e8e8e8" strokeWidth="1.600" /><path d="M13 8q2 3 0 6M17 5q4 6 0 12M21 2q6 9 0 18" stroke="#e8e8e8" strokeWidth="1.700" /></Svg>
        </div>
        <span className="ml-[16px]">ESP</span>
        <div className="ml-[24px] flex w-[82px] flex-col items-center leading-[27px]">
          <time>09:32</time>
          <time>8/03/2021</time>
        </div>
        <button type="button" aria-label="Notificaciones" className="ml-[31px]">
          <Svg w={26} h={26} box="0 0 26 26"><path d="M15 20l-3 4-4-4H1V2h24v13" stroke="#e8e8e8" strokeWidth="1.800" /><path d="M25 15q-1 4-6 5 1 4 4 3 4-2 2-8z" fill="#e8e8e8" /></Svg>
        </button>
        <span className="mr-[5px] ml-[31px] h-[61px] w-px bg-[#6c7274]" />
      </div>
    </footer>
  );
}

export default function App() {
  return (
    <div className="relative flex h-screen flex-col overflow-hidden bg-white font-['Open_Sans','Noto_Sans',sans-serif] text-[17px]">
      <header className="flex h-[33px] shrink-0 items-center gap-[7px] pl-[2px] text-[#8a8a8a]">
        <Headphones size={26} />
        <h1>MI VOZ</h1>
        <div className="ml-auto flex items-center gap-[52px] pr-[29px]">
          <button type="button" aria-label="Minimizar"><Svg w={15} h={16} box="0 0 15 16"><path d="M0 8h15" stroke="#999" strokeWidth="1.500" /></Svg></button>
          <button type="button" aria-label="Restaurar"><Svg w={16} h={16} box="0 0 16 16"><path d="M1 4h11v11H1zM4 4V1h11v11h-3" stroke="#999" strokeWidth="1.400" /></Svg></button>
          <button type="button" aria-label="Cerrar"><Cross color="#999" /></button>
        </div>
      </header>
      <nav className="flex h-[33px] shrink-0 items-center gap-[20px] pl-[11px] text-[#7a7a7a]">
        {MENU.map((m) => (
          <button key={m} type="button">{m}</button>
        ))}
      </nav>
      <Toolbars />
      <Tracks />
      <div className="flex h-[26px] shrink-0 items-center border-t border-white bg-[#f0f0f0] pr-[30px] pl-[209px]">
        <Chevron turn="-rotate-90" />
        <div className="ml-[7px] h-[23px] flex-[74] bg-[#cdcdcd]" />
        <div className="flex-[26]" />
        <Chevron turn="rotate-90" />
      </div>
      <SelectionBar />
      <div className="flex h-[35px] shrink-0 items-center bg-[#f0f0f0] text-[#222]">
        <span className="h-[30px] w-[15px] border-r border-[#dadada]" />
        <span className="w-[353px] border-r border-[#dadada] pt-[2px] pl-[6px] leading-[30px]">Detenido.</span>
        <span className="flex-1 pt-[2px] pl-[6px] leading-[30px]">Haga clic y arrastre para desplazar una pista en el tiempo</span>
        <span className="h-[30px] w-[268px] border-l border-[#dadada]" />
      </div>
      <Taskbar />
      <ExportDialog />
      <MetadataDialog />
    </div>
  );
}
